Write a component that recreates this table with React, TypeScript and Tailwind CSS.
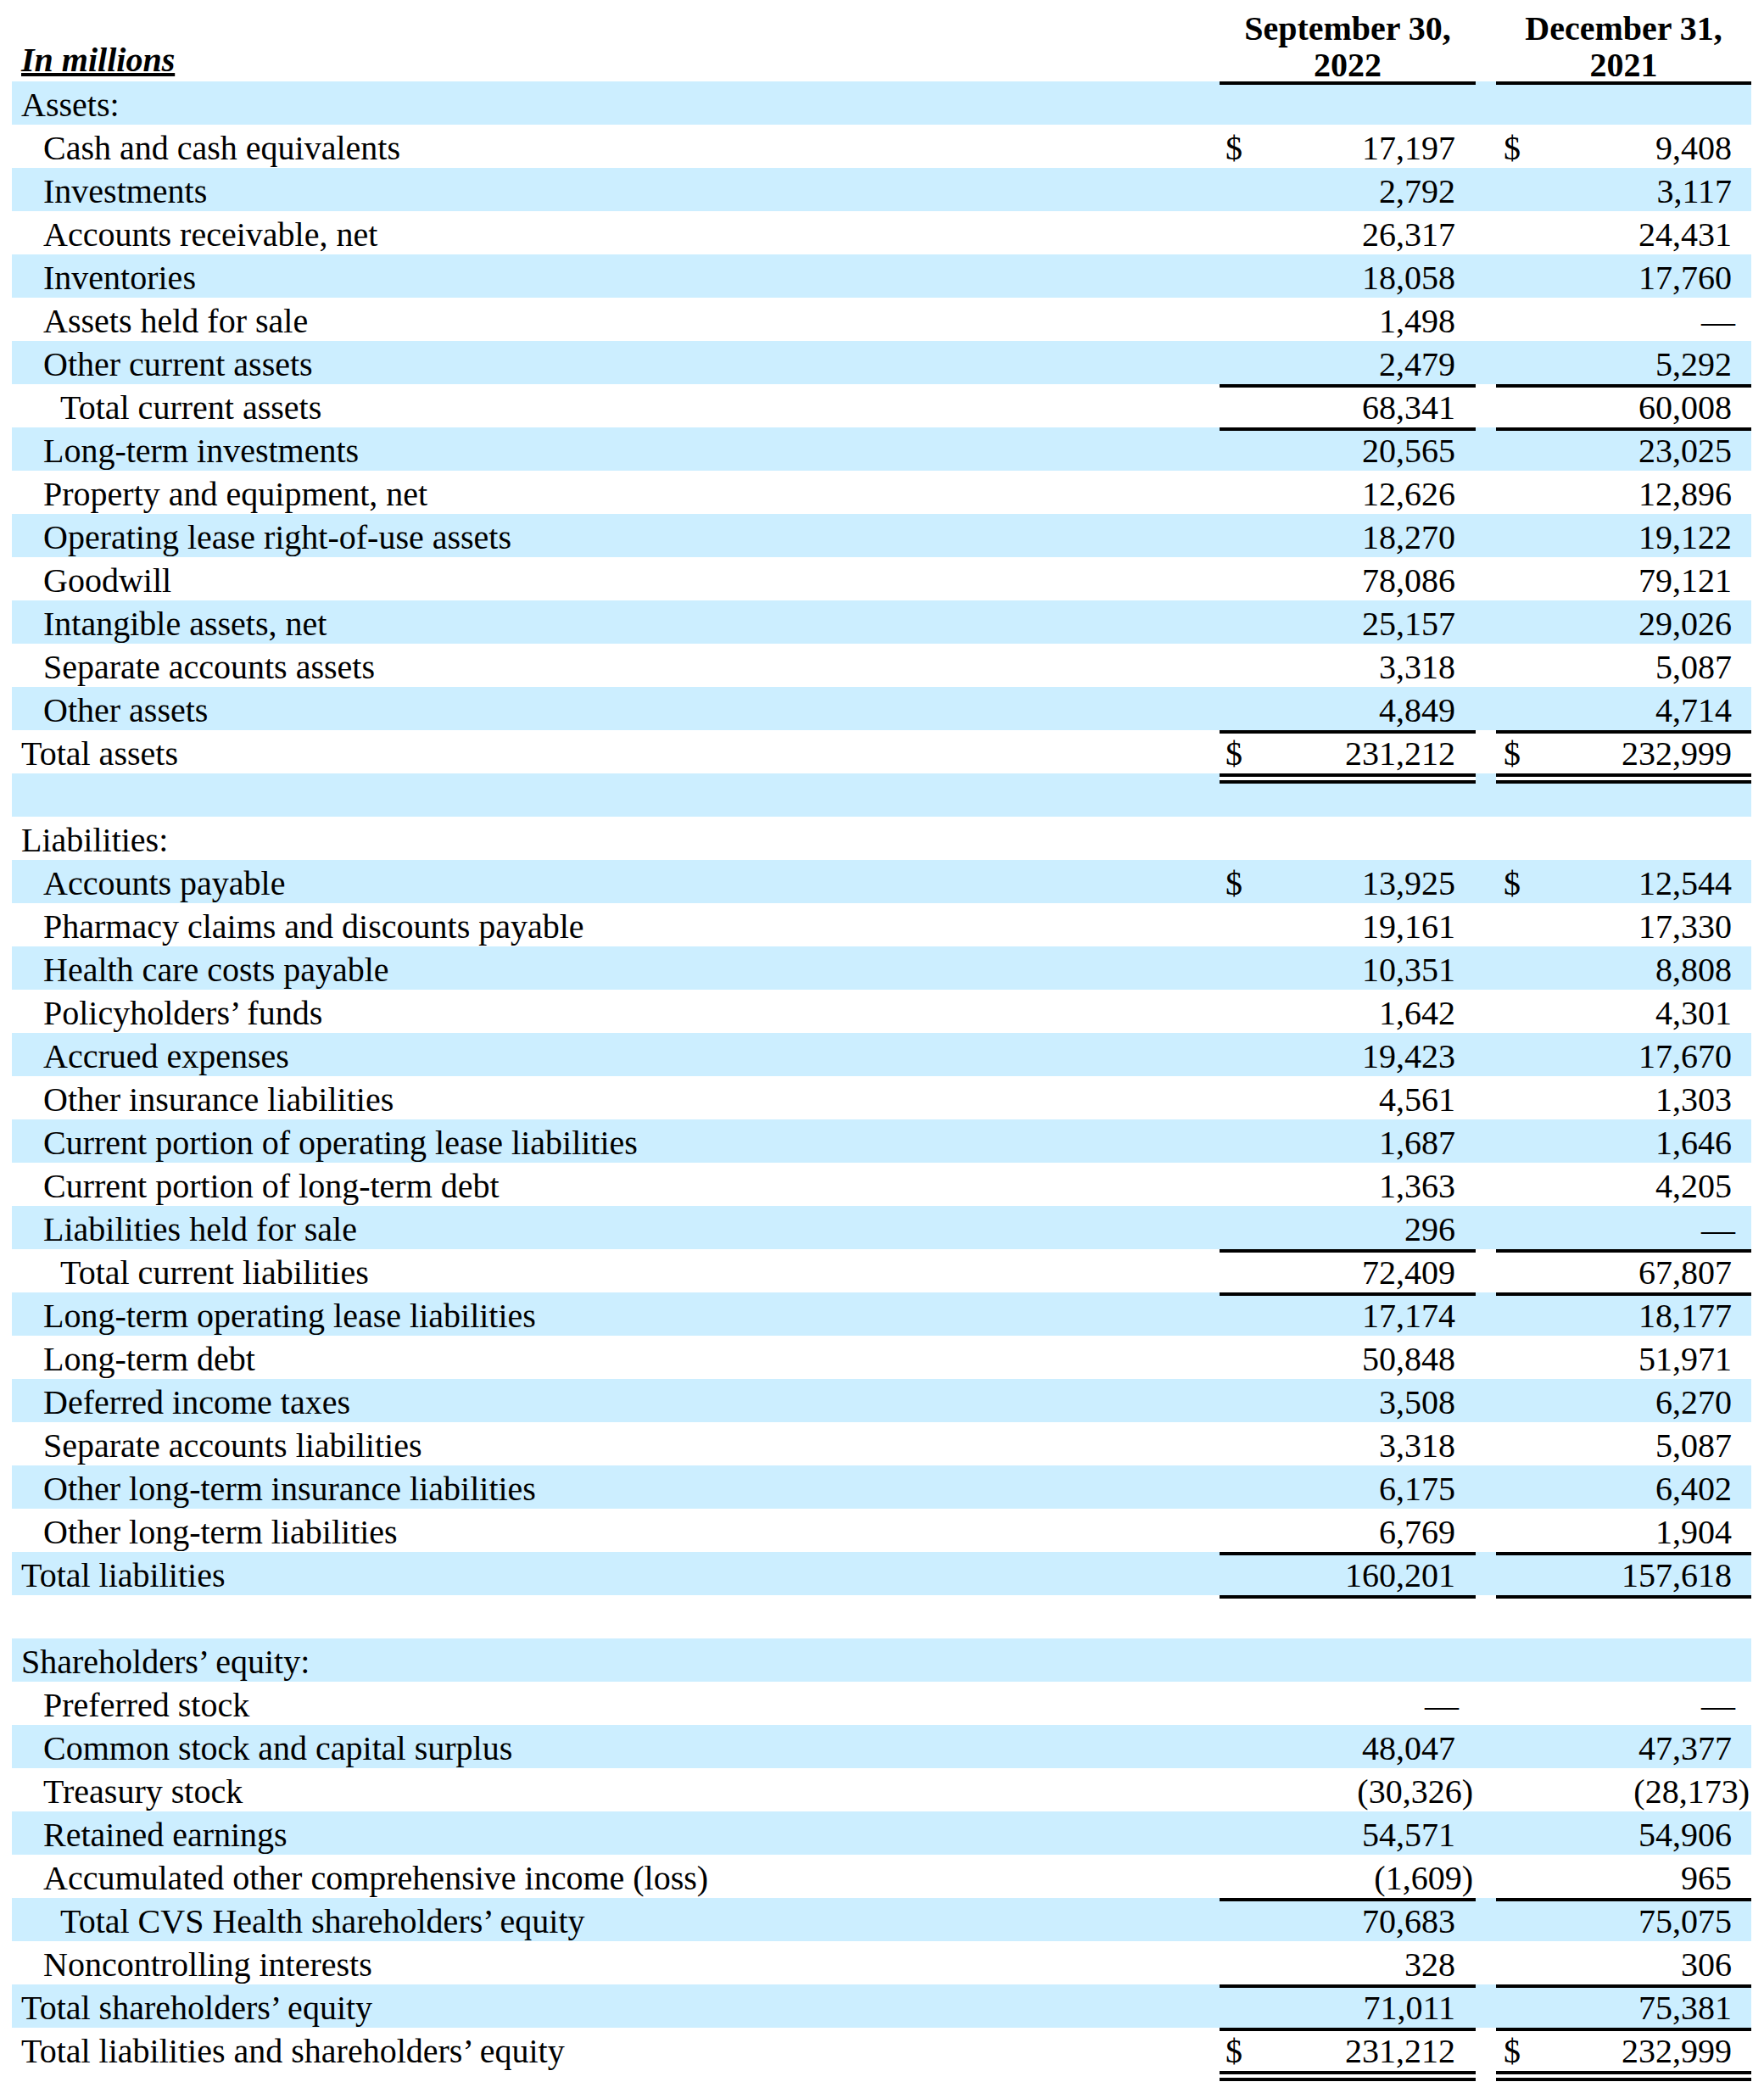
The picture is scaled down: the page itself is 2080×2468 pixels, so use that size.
import React from "react";

type Line = "single" | "double" | undefined;

type Row = {
  label: string;
  indent?: 0 | 1 | 2;
  a?: string;
  b?: string;
  dollar?: boolean;
  line?: Line;
};

const rows: Row[] = [
  { label: "Assets:", indent: 0, line: "single" },
  { label: "Cash and cash equivalents", indent: 1, a: "17,197", b: "9,408", dollar: true },
  { label: "Investments", indent: 1, a: "2,792", b: "3,117" },
  { label: "Accounts receivable, net", indent: 1, a: "26,317", b: "24,431" },
  { label: "Inventories", indent: 1, a: "18,058", b: "17,760" },
  { label: "Assets held for sale", indent: 1, a: "1,498", b: "—" },
  { label: "Other current assets", indent: 1, a: "2,479", b: "5,292" },
  { label: "Total current assets", indent: 2, a: "68,341", b: "60,008", line: "single" },
  { label: "Long-term investments", indent: 1, a: "20,565", b: "23,025", line: "single" },
  { label: "Property and equipment, net", indent: 1, a: "12,626", b: "12,896" },
  { label: "Operating lease right-of-use assets", indent: 1, a: "18,270", b: "19,122" },
  { label: "Goodwill", indent: 1, a: "78,086", b: "79,121" },
  { label: "Intangible assets, net", indent: 1, a: "25,157", b: "29,026" },
  { label: "Separate accounts assets", indent: 1, a: "3,318", b: "5,087" },
  { label: "Other assets", indent: 1, a: "4,849", b: "4,714" },
  { label: "Total assets", indent: 0, a: "231,212", b: "232,999", dollar: true, line: "single" },
  { label: "", indent: 0, line: "double" },
  { label: "Liabilities:", indent: 0 },
  { label: "Accounts payable", indent: 1, a: "13,925", b: "12,544", dollar: true },
  { label: "Pharmacy claims and discounts payable", indent: 1, a: "19,161", b: "17,330" },
  { label: "Health care costs payable", indent: 1, a: "10,351", b: "8,808" },
  { label: "Policyholders’ funds", indent: 1, a: "1,642", b: "4,301" },
  { label: "Accrued expenses", indent: 1, a: "19,423", b: "17,670" },
  { label: "Other insurance liabilities", indent: 1, a: "4,561", b: "1,303" },
  { label: "Current portion of operating lease liabilities", indent: 1, a: "1,687", b: "1,646" },
  { label: "Current portion of long-term debt", indent: 1, a: "1,363", b: "4,205" },
  { label: "Liabilities held for sale", indent: 1, a: "296", b: "—" },
  { label: "Total current liabilities", indent: 2, a: "72,409", b: "67,807", line: "single" },
  { label: "Long-term operating lease liabilities", indent: 1, a: "17,174", b: "18,177", line: "single" },
  { label: "Long-term debt", indent: 1, a: "50,848", b: "51,971" },
  { label: "Deferred income taxes", indent: 1, a: "3,508", b: "6,270" },
  { label: "Separate accounts liabilities", indent: 1, a: "3,318", b: "5,087" },
  { label: "Other long-term insurance liabilities", indent: 1, a: "6,175", b: "6,402" },
  { label: "Other long-term liabilities", indent: 1, a: "6,769", b: "1,904" },
  { label: "Total liabilities", indent: 0, a: "160,201", b: "157,618", line: "single" },
  { label: "", indent: 0, line: "single" },
  { label: "Shareholders’ equity:", indent: 0 },
  { label: "Preferred stock", indent: 1, a: "—", b: "—" },
  { label: "Common stock and capital surplus", indent: 1, a: "48,047", b: "47,377" },
  { label: "Treasury stock", indent: 1, a: "(30,326)", b: "(28,173)" },
  { label: "Retained earnings", indent: 1, a: "54,571", b: "54,906" },
  { label: "Accumulated other comprehensive income (loss)", indent: 1, a: "(1,609)", b: "965" },
  { label: "Total CVS Health shareholders’ equity", indent: 2, a: "70,683", b: "75,075", line: "single" },
  { label: "Noncontrolling interests", indent: 1, a: "328", b: "306" },
  { label: "Total shareholders’ equity", indent: 0, a: "71,011", b: "75,381", line: "single" },
  { label: "Total liabilities and shareholders’ equity", indent: 0, a: "231,212", b: "232,999", dollar: true, line: "single" },
];

const indentClass = ["pl-[11px]", "pl-[37px]", "pl-[57px]"];

function lineClass(line: Line) {
  if (line === "single") return "shadow-[inset_0_4px_0_#000]";
  if (line === "double")
    return "shadow-[inset_0_4px_0_#000,inset_0_8px_0_#fff,inset_0_12px_0_#000]";
  return "";
}

function NumCell({
  value,
  dollar,
  line,
  col,
}: {
  value?: string;
  dollar?: boolean;
  line: Line;
  col: 1 | 2;
}) {
  const main = value ?? "";
  const isDash = main === "—";
  const isNeg = main.endsWith(")");
  let content: React.ReactNode = main;
  if (isDash) content = <span className="-mr-[4px]">{main}</span>;
  else if (isNeg) content = <span className="-mr-[21px]">{main}</span>;
  return (
    <div
      className={`flex h-full ${col === 1 ? "w-[302px] pl-[7px] pr-[24px]" : "w-[301px] pl-[9px] pr-[23px]"} ${lineClass(line)}`}
    >
      <span className="w-[24px] shrink-0">{dollar ? "$" : ""}</span>
      <span className="flex-1 text-right whitespace-nowrap">{content}</span>
    </div>
  );
}

function TableRow({ row, blue }: { row: Row; blue: boolean }) {
  return (
    <div className={`flex h-[51px] ${blue ? "bg-[#cceeff]" : "bg-white"}`}>
      <div className={`w-[1424px] shrink-0 whitespace-nowrap pt-[5px] leading-[46px] ${indentClass[row.indent ?? 0]}`}>
        {row.label}
      </div>
      <div className="flex h-[51px] pt-0 leading-[56px]">
        <NumCell value={row.a} dollar={row.dollar} line={row.line} col={1} />
        <div className="w-[24px] shrink-0" />
        <NumCell value={row.b} dollar={row.dollar} line={row.line} col={2} />
      </div>
    </div>
  );
}

export default function App() {
  return (
    <div className="w-[2080px] h-[2468px] overflow-hidden bg-white pl-[14px] font-['Liberation_Serif','Times_New_Roman',serif] text-[40px] text-black">
      <div className="w-[2051px]">
        <div className="flex h-[96px]">
          <div className="flex w-[1424px] shrink-0 items-end pb-[4px] pl-[11px]">
            <span className="font-bold italic underline leading-[43px]">In millions</span>
          </div>
          <div className="flex w-[302px] shrink-0 flex-col items-center justify-end">
            <div className="-mb-[2px] flex flex-col items-center font-bold leading-[43px] whitespace-nowrap">
              <span>September 30,</span>
              <span>2022</span>
            </div>
          </div>
          <div className="w-[24px] shrink-0" />
          <div className="flex w-[301px] shrink-0 flex-col items-center justify-end">
            <div className="-mb-[2px] flex flex-col items-center font-bold leading-[43px] whitespace-nowrap">
              <span>December 31,</span>
              <span>2021</span>
            </div>
          </div>
        </div>
        {rows.map((r, i) => (
          <TableRow key={i} row={r} blue={i % 2 === 0} />
        ))}
        <div className="flex h-[26px] bg-white">
          <div className="w-[1424px] shrink-0" />
          <div className={`w-[302px] shrink-0 ${lineClass("double")}`} />
          <div className="w-[24px] shrink-0" />
          <div className={`w-[301px] shrink-0 ${lineClass("double")}`} />
        </div>
      </div>
    </div>
  );
}
